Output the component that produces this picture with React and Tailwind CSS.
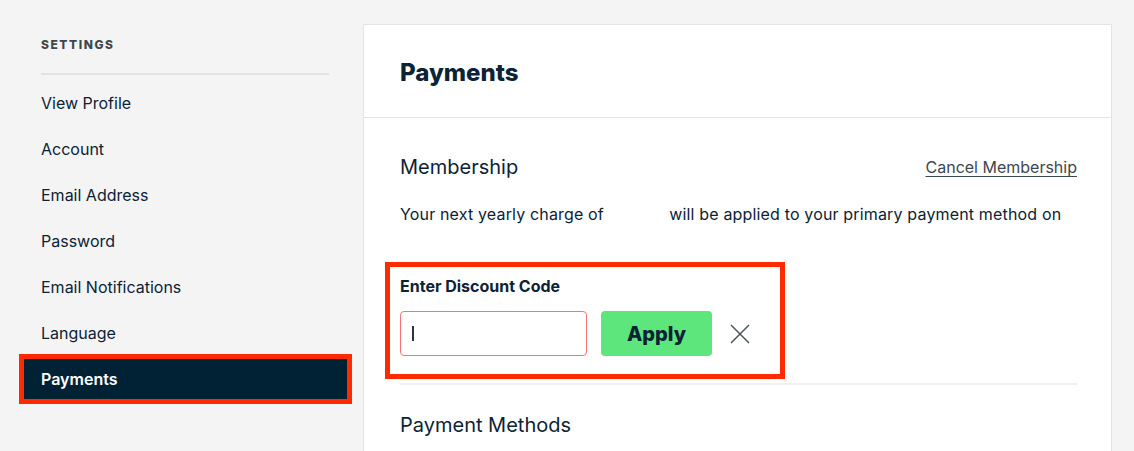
import React from "react";

const items = [
  "View Profile",
  "Account",
  "Email Address",
  "Password",
  "Email Notifications",
  "Language",
];

export default function App() {
  return (
    <div
      className="w-[1134px] h-[451px] bg-[#f4f4f4] flex overflow-hidden text-[#0b2335]"
      style={{ fontFamily: "Inter, 'Noto Sans', sans-serif" }}
    >
      {/* Sidebar */}
      <aside className="w-[363px] shrink-0 pl-[41px] pt-[37px]">
        <div className="w-[288px]">
          <div className="text-[12px] leading-[16px] font-extrabold tracking-[0.13em] text-[#3b484e]">
            SETTINGS
          </div>
          <div className="mt-[20px] h-[2px] bg-[#e3e3e6]" />
          <div className="mt-[5px] flex flex-col">
            {items.map((t) => (
              <div key={t} className="h-[46px] flex items-center text-[16px] leading-[24px]">
                {t}
              </div>
            ))}
            <div className="h-[46px] flex items-center">
              <div className="shrink-0 -ml-[17px] w-[323px] h-[40px] bg-[#012235] outline-[5px] outline-solid outline-[#ff2a00] pl-[17px] flex items-center text-white font-semibold text-[16px]">
                Payments
              </div>
            </div>
          </div>
        </div>
      </aside>

      {/* Main card */}
      <main className="mt-[24px] w-[749px] shrink-0 bg-white border border-[#e4e4e7] self-start h-[460px]">
        <div className="h-[93px] border-b border-[#e4e4e7] pl-[36px] flex items-center pt-[3px]">
          <h1 className="text-[24px] leading-[32px] font-extrabold">Payments</h1>
        </div>
        <div className="pl-[36px] pr-[34px] pt-[35px]">
          <div className="flex items-center justify-between">
            <div className="text-[20px] leading-[28px]">Membership</div>
            <a className="text-[16px] leading-[24px] underline underline-offset-[3px] text-[#3c474e]">
              Cancel Membership
            </a>
          </div>
          <p className="mt-[21px] text-[16px] leading-[24px] tracking-[0.01em] whitespace-nowrap">
            Your next yearly charge of{" "}
            <span className="inline-block w-[56px]" />
            {" "}will be applied to your primary payment method on
          </p>

          <div className="mt-[36px] -ml-[15px] w-[400px] h-[117px] border-[5px] border-[#ff2a00] pl-[10px] pt-[7px]">
            <div className="text-[16px] leading-[24px] font-bold">Enter Discount Code</div>
            <div className="mt-[13px] flex items-center">
              <div className="w-[187px] h-[45px] border border-[#f57373] rounded-[4px] flex items-center pl-[11px]">
                <span className="w-[1.5px] h-[15px] bg-[#333]" />
              </div>
              <button className="ml-[14px] w-[111px] h-[45px] rounded-[4px] bg-[#5ce67b] text-[20px] font-extrabold text-[#0b2335]">
                Apply
              </button>
              <svg className="ml-[18px]" width="20" height="20" viewBox="0 0 20 20">
                <path d="M1 1L19 19M19 1L1 19" stroke="#4a545b" strokeWidth="1.5" />
              </svg>
            </div>
          </div>

          <div className="mt-[4px] h-[2px] bg-[#f0f0f0]" />
          <div className="mt-[26px] text-[20px] leading-[28px]">Payment Methods</div>
        </div>
      </main>
    </div>
  );
}
